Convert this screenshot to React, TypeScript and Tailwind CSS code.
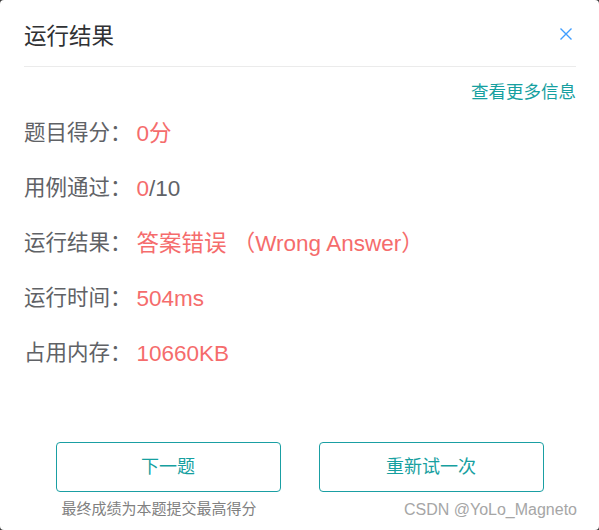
import React from 'react';

const rows: { label: string; value: React.ReactNode }[] = [
  { label: '题目得分：', value: <span className="text-[#f56c6c]">0分</span> },
  {
    label: '用例通过：',
    value: (
      <span>
        <span className="text-[#f56c6c]">0</span>/10
      </span>
    ),
  },
  { label: '运行结果：', value: <span className="text-[#f56c6c]">答案错误 （Wrong Answer）</span> },
  { label: '运行时间：', value: <span className="text-[#f56c6c]">504ms</span> },
  { label: '占用内存：', value: <span className="text-[#f56c6c]">10660KB</span> },
];

const CloseIcon = () => (
  <svg width="12" height="12" viewBox="0 0 12 12" fill="none">
    <path d="M0.5 0.5L11.5 11.5M11.5 0.5L0.5 11.5" stroke="#409eff" strokeWidth="1.4" />
  </svg>
);

export default function App() {
  return (
    <div
      className="w-[599px] h-[530px] bg-[#3a3a3a]"
      style={{ fontFamily: '"Liberation Sans", "Noto Sans CJK SC", sans-serif' }}
    >
      <div className="relative w-full h-full bg-white rounded-[4px] flex flex-col pl-[24px] pr-[23px]">
        {/* header */}
        <div className="flex justify-between items-start pt-[22px] pb-[14px] border-b border-[#ebebeb]">
          <h1 className="text-[22.5px] leading-[30px] text-[#303133]">运行结果</h1>
          <button className="mt-[6px] mr-[4px]">
            <CloseIcon />
          </button>
        </div>

        <div className="flex justify-end mt-[13px]">
          <a className="text-[17.5px] leading-[24px] text-[#16a0a0] cursor-pointer">查看更多信息</a>
        </div>

        <div className="mt-[2px] flex flex-col">
          {rows.map((row) => (
            <div key={row.label} className="h-[55px] flex items-center text-[21.5px] text-[#606266]">
              <span>{row.label}</span>
              <span className="ml-[5px] text-[22.5px]">{row.value}</span>
            </div>
          ))}
        </div>

        <div className="mt-[61px] -ml-[24px] -mr-[23px] grid grid-cols-[225px_225px] gap-x-[38px] justify-center">
          <div className="flex flex-col">
            <button className="h-[50px] border border-[#1a9fa3] rounded-[4px] text-[18px] text-[#16a0a0]">
              下一题
            </button>
            <p className="mt-[7px] pl-[6px] text-[15px] leading-[20px] text-[#808080]">最终成绩为本题提交最高得分</p>
          </div>
          <div className="flex flex-col">
            <button className="h-[50px] border border-[#1a9fa3] rounded-[4px] text-[18px] text-[#16a0a0]">
              重新试一次
            </button>
          </div>
        </div>

        <span className="absolute right-[22px] bottom-[11px] text-[16px] leading-[18px] text-[#a6a6a6]">
          CSDN @YoLo_Magneto
        </span>
      </div>
    </div>
  );
}
